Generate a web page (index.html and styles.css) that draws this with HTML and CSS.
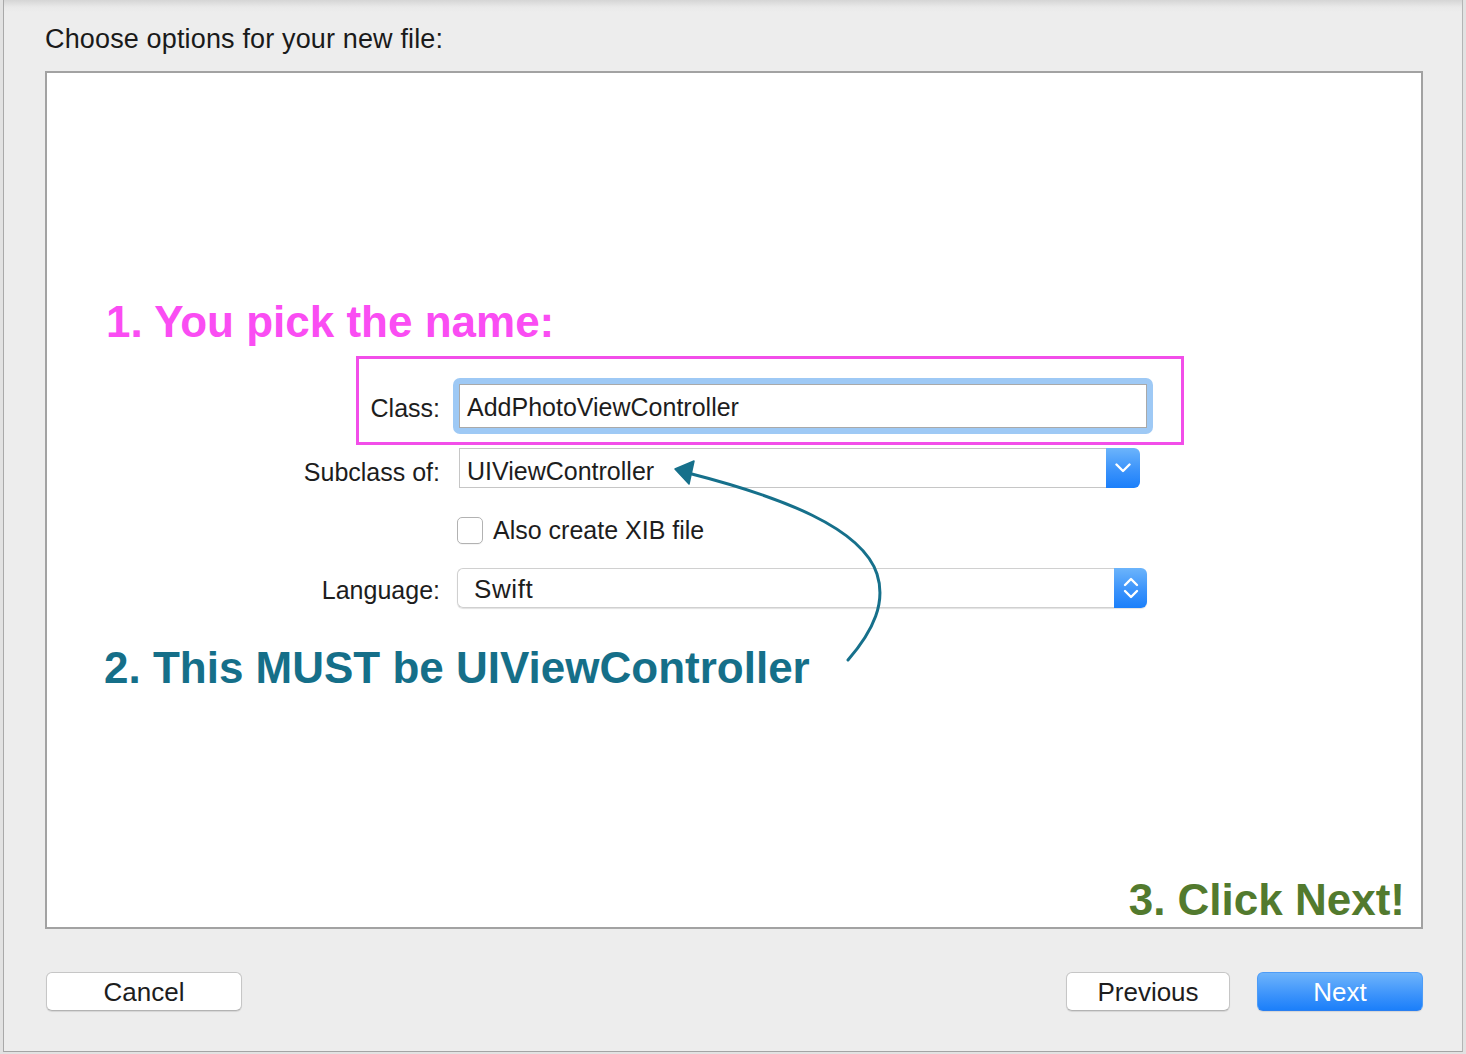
FILE: index.html
```html
<!DOCTYPE html>
<html lang="en">
<head>
<meta charset="utf-8">
<title>Choose options for your new file</title>
<link rel="stylesheet" href="styles.css">
</head>
<body>
<div class="window">
  <h1 class="heading">Choose options for your new file:</h1>
  <div class="panel">
    <svg class="overlay" viewBox="47 73 1374 854" width="1374" height="854" aria-hidden="true">
      <rect class="callout" x="357.5" y="357.5" width="825" height="86" />
      <path class="arrow" d="M848,660 C874,630 886,602 877,574 C862,528 782,497 688,473" />
      <polygon class="arrow-head" points="675,469 694,461 689,484" />
    </svg>

    <p class="note note-pink">1. You pick the name:</p>

    <div class="form">
      <div class="row row-class">
        <span class="label">Class:</span>
        <div class="focus-ring"><div class="textfield">AddPhotoViewController</div></div>
      </div>
      <div class="row row-sub">
        <span class="label">Subclass of:</span>
        <div class="combo">
          <span class="combo-text">UIViewController</span>
          <span class="blue-btn combo-btn">
            <svg width="16" height="10" viewBox="0 0 16 10"><path d="M1.5,1.5 L8,8 L14.5,1.5" /></svg>
          </span>
        </div>
      </div>
      <div class="row row-check">
        <span class="label"></span>
        <span class="checkbox"></span>
        <span class="check-text">Also create XIB file</span>
      </div>
      <div class="row row-lang">
        <span class="label">Language:</span>
        <div class="popup">
          <span class="popup-text">Swift</span>
          <span class="blue-btn popup-btn">
            <svg width="16" height="24" viewBox="0 0 16 24"><path d="M2,9 L8,3 L14,9" /><path d="M2,15 L8,21 L14,15" /></svg>
          </span>
        </div>
      </div>
    </div>

    <p class="note note-teal">2. This MUST be UIViewController</p>
    <p class="note note-green">3. Click Next!</p>
  </div>

  <div class="buttons">
    <button class="btn btn-cancel">Cancel</button>
    <button class="btn btn-prev">Previous</button>
    <button class="btn btn-next">Next</button>
  </div>
</div>
</body>
</html>
```

FILE: styles.css
```css
html, body {
  margin: 0;
  padding: 0;
}

body {
  background: #e2e2e2;
  font-family: "Liberation Sans", Arial, Helvetica, sans-serif;
  color: #1d1d1d;
}

.window {
  box-sizing: border-box;
  margin-left: 3px;
  width: 1460px;
  height: 1052px;
  padding: 23px 39px 0 41px;
  border-left: 1px solid #a9a9a9;
  border-right: 1px solid #b4b4b4;
  border-bottom: 1px solid #a4a4a4;
  background: linear-gradient(#d5d5d5, #e9e9e9 7px, #ededed 12px, #ededed);
}

.heading {
  margin: 0;
  font-size: 27px;
  font-weight: normal;
  line-height: 32px;
  height: 32px;
  letter-spacing: 0.15px;
  color: #1a1a1a;
}

.panel {
  position: relative;
  box-sizing: border-box;
  margin-top: 16px;
  width: 1378px;
  height: 858px;
  border: 2px solid #a2a2a2;
  background: #ffffff;
  display: flex;
  flex-direction: column;
}

.overlay {
  position: absolute;
  left: 0;
  top: 0;
  z-index: 2;
  pointer-events: none;
}

.callout {
  fill: none;
  stroke: #f24ee9;
  stroke-width: 3;
}

.arrow {
  fill: none;
  stroke: #16708b;
  stroke-width: 3;
  stroke-linecap: round;
}

.arrow-head {
  fill: #16708b;
  stroke: #16708b;
  stroke-width: 1.5;
  stroke-linejoin: round;
}

.note {
  margin: 0;
  font-size: 44px;
  font-weight: bold;
  line-height: 50px;
  white-space: nowrap;
}

.note-pink {
  margin: 224px 0 0 59px;
  height: 50px;
  color: #fa4df3;
}

.note-teal {
  margin: 37px 0 0 57px;
  color: #156f89;
  position: relative;
  top: -2px;
}

.note-green {
  margin-top: auto;
  align-self: flex-end;
  margin-right: 16px;
  margin-bottom: 2px;
  color: #527a2e;
}

.form {
  margin-top: 31px;
  font-size: 25px;
}

.row {
  display: flex;
  align-items: center;
}

.label {
  box-sizing: border-box;
  flex: none;
  width: 393px;
  margin-right: 13px;
  text-align: right;
  line-height: 30px;
  padding-top: 3px;
  white-space: nowrap;
}

.row-class {
  height: 56px;
}

.row-sub {
  height: 40px;
  margin-top: 14px;
}

.row-sub .label {
  padding-top: 7px;
}

.row-check {
  height: 28px;
  margin-top: 28px;
}

.row-check .label {
  padding-top: 0;
}

.row-lang {
  height: 40px;
  margin-top: 24px;
}

.focus-ring {
  box-sizing: border-box;
  width: 700px;
  height: 56px;
  padding: 6px;
  border-radius: 7px;
  background: #9ec9f5;
}

.textfield {
  box-sizing: border-box;
  height: 44px;
  border: 1px solid #a9a9a9;
  background: #ffffff;
  padding: 1px 0 0 7px;
  line-height: 42px;
  white-space: nowrap;
}

.combo {
  display: flex;
  margin-left: 6px;
  width: 681px;
  height: 40px;
}

.combo-text {
  box-sizing: border-box;
  flex: 1;
  height: 40px;
  border: 1px solid #c6c6c6;
  border-right: none;
  background: #ffffff;
  padding: 6px 0 0 7px;
  line-height: 32px;
  white-space: nowrap;
}

.blue-btn {
  display: flex;
  align-items: center;
  justify-content: center;
  background: linear-gradient(#6cb4fb, #3b93fb 55%, #1b7ffa);
  border-radius: 0 6px 6px 0;
}

.blue-btn svg path {
  fill: none;
  stroke: #ffffff;
  stroke-width: 2.4;
  stroke-linecap: round;
  stroke-linejoin: round;
}

.combo-btn {
  width: 34px;
  height: 40px;
}

.checkbox {
  box-sizing: border-box;
  width: 26px;
  height: 27px;
  margin-left: 4px;
  border: 1px solid #b2b2b2;
  border-radius: 5px;
  background: #ffffff;
  box-shadow: 0 1px 0 rgba(0, 0, 0, 0.04);
}

.check-text {
  margin-left: 10px;
  line-height: 30px;
  white-space: nowrap;
}

.popup {
  display: flex;
  margin-left: 4px;
  width: 690px;
  height: 40px;
  border-radius: 6px;
  box-shadow: 0 1px 1px rgba(0, 0, 0, 0.12);
}

.popup-text {
  box-sizing: border-box;
  flex: 1;
  height: 40px;
  border: 1px solid #d0d0d0;
  border-right: none;
  border-radius: 6px 0 0 6px;
  background: #ffffff;
  padding: 3px 0 0 16px;
  font-size: 26px;
  line-height: 34px;
  letter-spacing: 0.6px;
  white-space: nowrap;
}

.popup-btn {
  width: 33px;
  height: 40px;
}

.buttons {
  display: flex;
  margin-top: 43px;
  height: 39px;
}

.btn {
  box-sizing: border-box;
  height: 39px;
  padding: 0;
  border: 1px solid #c6c6c6;
  border-bottom-color: #b3b3b3;
  border-radius: 6px;
  background: #ffffff;
  font-family: "Liberation Sans", Arial, Helvetica, sans-serif;
  font-size: 26px;
  line-height: 36px;
  color: #1d1d1d;
  box-shadow: 0 1px 1px rgba(0, 0, 0, 0.1);
}

.btn-cancel {
  width: 196px;
  margin-left: 1px;
}

.btn-prev {
  width: 164px;
  margin-left: auto;
}

.btn-next {
  width: 166px;
  margin-left: 27px;
  border: 1px solid #4d9cf7;
  border-bottom-color: #2a7ff0;
  background: linear-gradient(#6eb4fb, #3f95fb 55%, #1b7ffa);
  color: #ffffff;
}
```
